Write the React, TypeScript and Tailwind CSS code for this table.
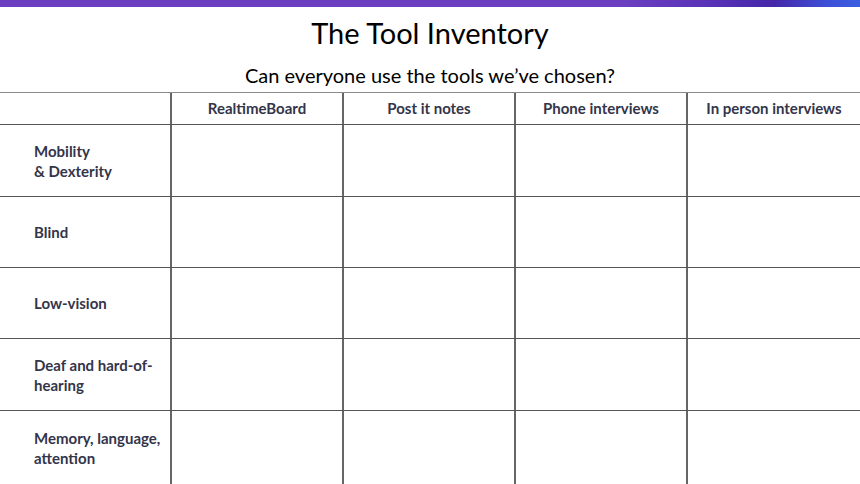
const tools = ["RealtimeBoard", "Post it notes", "Phone interviews", "In person interviews"]

const needs: { label: string[]; h: string }[] = [
  { label: ["Mobility", "& Dexterity"], h: "h-[72px]" },
  { label: ["Blind"], h: "h-[71px]" },
  { label: ["Low-vision"], h: "h-[71px]" },
  { label: ["Deaf and hard-of-", "hearing"], h: "h-[72px]" },
  { label: ["Memory, language,", "attention"], h: "h-[74px]" },
]

export default function App() {
  return (
    <div className="w-[860px] h-[484px] overflow-hidden bg-white font-['Lato','Open_Sans',sans-serif]">
      {/* top bar */}
      <div className="h-[7px] bg-[linear-gradient(90deg,#6b3fc0_0%,#6b3fc0_72%,#5a33b8_82%,#4527a8_90%,#3d4fd6_96%,#3a5ee0_100%)]" />

      {/* titles */}
      <div className="flex flex-col items-center">
        <h1 className="mt-[9px] text-[29px] leading-[34px] text-black">The Tool Inventory</h1>
        <p className="mt-[13px] text-[20px] leading-[24px] text-black">Can everyone use the tools we’ve chosen?</p>
      </div>

      {/* table */}
      <div className="mt-[5px] border-t border-[#8a8a8a]">
        <div className="flex h-[32px] border-b border-[#555]">
          <div className="w-[172px] border-r-2 border-[#666]" />
          {tools.map((t, i) => (
            <div
              key={t}
              className={`w-[172px] flex items-center justify-center text-[15px] font-bold text-[#33354a] ${i < 3 ? "border-r-2 border-[#666]" : ""}`}
            >
              {t}
            </div>
          ))}
        </div>

        {needs.map((n, r) => (
          <div key={r} className={`flex ${n.h} ${r < 4 ? "border-b border-[#555]" : ""}`}>
            <div className="w-[172px] border-r-2 border-[#666] flex items-center pl-[34px]">
              <div className="text-[15px] leading-[20px] font-bold text-[#33354a]">
                {n.label.map((l) => (
                  <div key={l}>{l}</div>
                ))}
              </div>
            </div>
            {tools.map((t, i) => (
              <div key={t} className={`w-[172px] ${i < 3 ? "border-r-2 border-[#666]" : ""}`} />
            ))}
          </div>
        ))}
      </div>
    </div>
  )
}
